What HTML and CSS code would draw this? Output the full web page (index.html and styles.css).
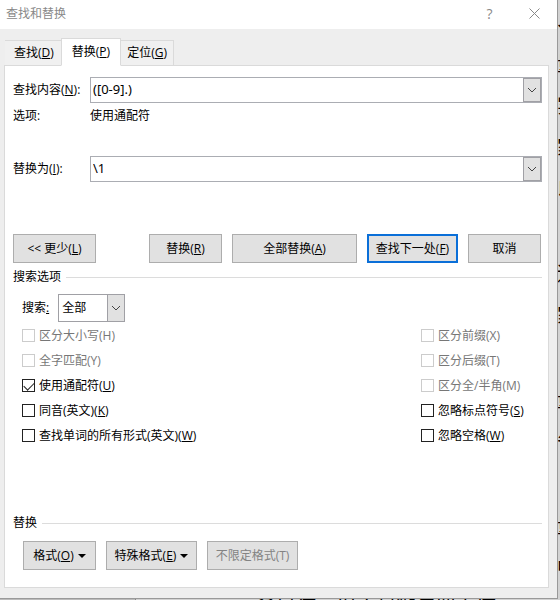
FILE: index.html
```
<!DOCTYPE html>
<html lang="zh-CN">
<head>
    <meta charset="UTF-8">
    <meta name="viewport" content="width=device-width, initial-scale=1.0">
    <title>查找和替换</title>
    <link rel="stylesheet" href="styles.css">
</head>
<body>

    <!-- Document behind the dialog -->
    <div class="document" aria-hidden="true">
        <div class="doc-side">
            <span>、</span><span>量</span><span>实</span><span>家</span><span>以</span><span></span><span>远</span><span>家</span><span></span><span>量</span><span>省</span><span></span><span>量</span><span>中</span>
        </div>
        <p class="doc-line">参是何、坦之村咖包罗上塔</p>
    </div>

    <div class="dialog" role="dialog" aria-labelledby="dialogTitle">

        <!-- Title bar -->
        <div class="titlebar">
            <h1 id="dialogTitle">查找和替换</h1>
            <button type="button" class="title-button" aria-label="帮助">?</button>
            <button type="button" class="title-button" aria-label="关闭">
                <svg width="11" height="11" viewBox="0 0 11 11"><path d="M0.5 0.5L10.5 10.5M10.5 0.5L0.5 10.5"/></svg>
            </button>
        </div>

        <!-- Tabs -->
        <div class="tabs" role="tablist">
            <button type="button" class="tab" role="tab">查找(<u>D</u>)</button>
            <button type="button" class="tab active" role="tab" aria-selected="true">替换(<u>P</u>)</button>
            <button type="button" class="tab" role="tab">定位(<u>G</u>)</button>
        </div>

        <form class="panel">
            <div class="field">
                <label for="findText">查找内容(<u>N</u>):</label>
                <div class="combo">
                    <input type="text" id="findText" value="([0-9].)">
                    <button type="button" class="arrow" aria-label="查找历史">
                        <svg width="10" height="6" viewBox="0 0 10 6"><path d="M1 1L5 5L9 1"/></svg>
                    </button>
                </div>
            </div>
            <div class="field option-row">
                <span class="caption">选项:</span>
                <span>使用通配符</span>
            </div>
            <div class="field">
                <label for="replaceText">替换为(<u>I</u>):</label>
                <div class="combo">
                    <input type="text" id="replaceText" value="\1">
                    <button type="button" class="arrow" aria-label="替换历史">
                        <svg width="10" height="6" viewBox="0 0 10 6"><path d="M1 1L5 5L9 1"/></svg>
                    </button>
                </div>
            </div>

            <!-- Main actions -->
            <div class="actions">
                <button type="button" class="btn less">&lt;&lt; 更少(<u>L</u>)</button>
                <button type="button" class="btn narrow">替换(<u>R</u>)</button>
                <button type="button" class="btn wide">全部替换(<u>A</u>)</button>
                <button type="button" class="btn medium default">查找下一处(<u>F</u>)</button>
                <button type="button" class="btn narrow">取消</button>
            </div>

            <!-- Search options -->
            <h2 class="group-title">搜索选项</h2>
            <div class="search-row">
                <label for="direction">搜索<u>:</u></label>
                <div class="dropdown">
                    <select id="direction">
                        <option>全部</option>
                        <option>向下</option>
                        <option>向上</option>
                    </select>
                    <span class="arrow">
                        <svg width="10" height="6" viewBox="0 0 10 6"><path d="M1 1L5 5L9 1"/></svg>
                    </span>
                </div>
            </div>
            <div class="checks">
                <div class="check-column">
                    <label class="check"><input type="checkbox" disabled><span>区分大小写(H)</span></label>
                    <label class="check"><input type="checkbox" disabled><span>全字匹配(Y)</span></label>
                    <label class="check"><input type="checkbox" checked><span>使用通配符(<u>U</u>)</span></label>
                    <label class="check"><input type="checkbox"><span>同音(英文)(<u>K</u>)</span></label>
                    <label class="check"><input type="checkbox"><span>查找单词的所有形式(英文)(<u>W</u>)</span></label>
                </div>
                <div class="check-column right">
                    <label class="check"><input type="checkbox" disabled><span>区分前缀(X)</span></label>
                    <label class="check"><input type="checkbox" disabled><span>区分后缀(T)</span></label>
                    <label class="check"><input type="checkbox" disabled><span>区分全/半角(M)</span></label>
                    <label class="check"><input type="checkbox"><span>忽略标点符号(<u>S</u>)</span></label>
                    <label class="check"><input type="checkbox"><span>忽略空格(<u>W</u>)</span></label>
                </div>
            </div>

            <!-- Replace formatting -->
            <h2 class="group-title">替换</h2>
            <div class="format-row">
                <button type="button" class="btn narrow">格式(<u>O</u>)<i class="caret"></i></button>
                <button type="button" class="btn medium">特殊格式(<u>E</u>)<i class="caret"></i></button>
                <button type="button" class="btn medium" disabled>不限定格式(T)</button>
            </div>
        </form>
    </div>

</body>
</html>
```
FILE: styles.css
```
* {
    box-sizing: border-box;
    margin: 0;
    padding: 0;
}

body {
    position: relative;
    min-height: 100vh;
    overflow: hidden;
    background-color: #d2d2d2;
    color: #000;
    font-family: "Open Sans", "Noto Sans CJK SC", sans-serif;
    font-size: 12px;
    line-height: 18px;
}

button, input, select {
    font: inherit;
    color: inherit;
}

u {
    text-underline-offset: 1px;
}

svg {
    display: block;
    fill: none;
    stroke: #444;
}

/* Document */
.document {
    position: absolute;
    inset: 0;
    overflow: hidden;
    background: linear-gradient(to right, #bbb 135px, #888 135px, #888 136px, #d2d2d2 136px);
    font-family: "Noto Sans CJK SC", sans-serif;
    font-size: 20px;
}

.doc-side {
    position: absolute;
    top: 0;
    right: -17px;
    display: grid;
    grid-auto-rows: 42px;
    align-items: center;
}

.doc-line {
    position: absolute;
    top: 594px;
    left: 256px;
    line-height: 24px;
    white-space: nowrap;
}

/* Dialog */
.dialog {
    position: relative;
    margin-right: 2px;
    padding-bottom: 10px;
    background-color: #eee;
    border-right: 1px solid #999;
    border-bottom: 1px solid #999;
}

.titlebar {
    display: flex;
    align-items: center;
    height: 29px;
    padding: 0 0 2px 6px;
    background-color: #fff;
    color: #888;
}

.titlebar h1 {
    flex: 1;
    font-size: 12px;
    font-weight: normal;
}

.title-button {
    display: flex;
    align-items: center;
    justify-content: center;
    width: 45px;
    height: 27px;
    border: none;
    background: none;
    font-size: 14px;
}

.title-button svg {
    stroke: #888;
}

/* Tabs */
.tabs {
    display: flex;
    align-items: flex-end;
    height: 37px;
    margin-left: 5px;
    position: relative;
    z-index: 1;
}

.tab {
    height: 26px;
    padding: 0 6px;
    border: 1px solid #dadada;
    border-left: none;
    background-color: #f0f0f0;
}

.tab:first-child {
    padding: 0 7px 0 9px;
    border-right: none;
}

.tab.active {
    height: 28px;
    padding: 0 10px;
    border-left: 1px solid #dadada;
    border-bottom-color: #fff;
    background-color: #fff;
}

.panel {
    margin: -1px 8px 0 4px;
    padding: 11px 6px 17px 8px;
    border: 1px solid #dadada;
    background-color: #fff;
}

/* Text fields */
.field {
    display: flex;
    align-items: center;
}

.field label, .field .caption {
    width: 77px;
}

.option-row {
    margin: 4px 0 31px;
}

.combo {
    display: flex;
    flex: 1;
    height: 26px;
    border: 1px solid #abadb3;
}

.combo input {
    flex: 1;
    min-width: 0;
    padding: 0 2px 2px;
    border: none;
    outline: none;
    font-family: "Noto Sans", "Noto Sans CJK SC", sans-serif;
    font-size: 13px;
}

.arrow {
    display: flex;
    align-items: center;
    justify-content: center;
    width: 18px;
    border: 1px solid #a0a0a5;
    background-color: #e1e1e1;
}

/* Buttons */
.btn {
    height: 29px;
    border: 1px solid #adadad;
    background-color: #e1e1e1;
    white-space: nowrap;
}

.btn:disabled {
    color: #838383;
}

.btn.default {
    border: 2px solid #0a6fd8;
}

.less {
    width: 83px;
    margin-right: auto;
}

.narrow {
    width: 73px;
}

.medium {
    width: 91px;
}

.wide {
    width: 125px;
}

.actions {
    display: flex;
    gap: 10px;
    margin: 52px 1px 0 0;
}

.caret {
    display: inline-block;
    margin: 0 0 2px 4px;
    border: 4px solid transparent;
    border-top-color: #000;
    border-bottom: none;
}

/* Option groups */
.group-title {
    display: flex;
    align-items: center;
    gap: 5px;
    margin-top: 5px;
    font-size: 12px;
    font-weight: normal;
}

.group-title::after {
    content: "";
    flex: 1;
    height: 1px;
    background-color: #dcdcdc;
}

.search-row {
    display: flex;
    align-items: center;
    gap: 9px;
    margin: 8px 0 1px 9px;
}

.dropdown {
    position: relative;
    width: 67px;
    height: 28px;
}

.dropdown select {
    width: 100%;
    height: 100%;
    padding: 0 3px;
    border: 1px solid #a0a0a5;
    border-radius: 0;
    background-color: #fff;
    appearance: none;
}

.dropdown .arrow {
    position: absolute;
    top: 0;
    right: 0;
    bottom: 0;
}

.dropdown .arrow {
    pointer-events: none;
}

.checks {
    display: flex;
    justify-content: space-between;
    margin: 0 0 66px 9px;
}

.check-column.right {
    width: 121px;
}

.check {
    display: flex;
    align-items: center;
    gap: 4px;
    height: 25px;
    white-space: nowrap;
}

.check input {
    width: 13px;
    height: 13px;
    border: 1px solid #222;
    background-color: #fff;
    appearance: none;
}

.check input:checked::after {
    content: "";
    display: block;
    width: 9px;
    height: 5px;
    margin: 2px 1px;
    border: solid #222;
    border-width: 0 0 1px 1px;
    transform: rotate(-45deg);
}

.check input:disabled {
    border-color: #ccc;
}

.check input:disabled + span {
    color: #777;
}

.format-row {
    display: flex;
    gap: 10px;
    margin: 9px 0 0 10px;
}
```
